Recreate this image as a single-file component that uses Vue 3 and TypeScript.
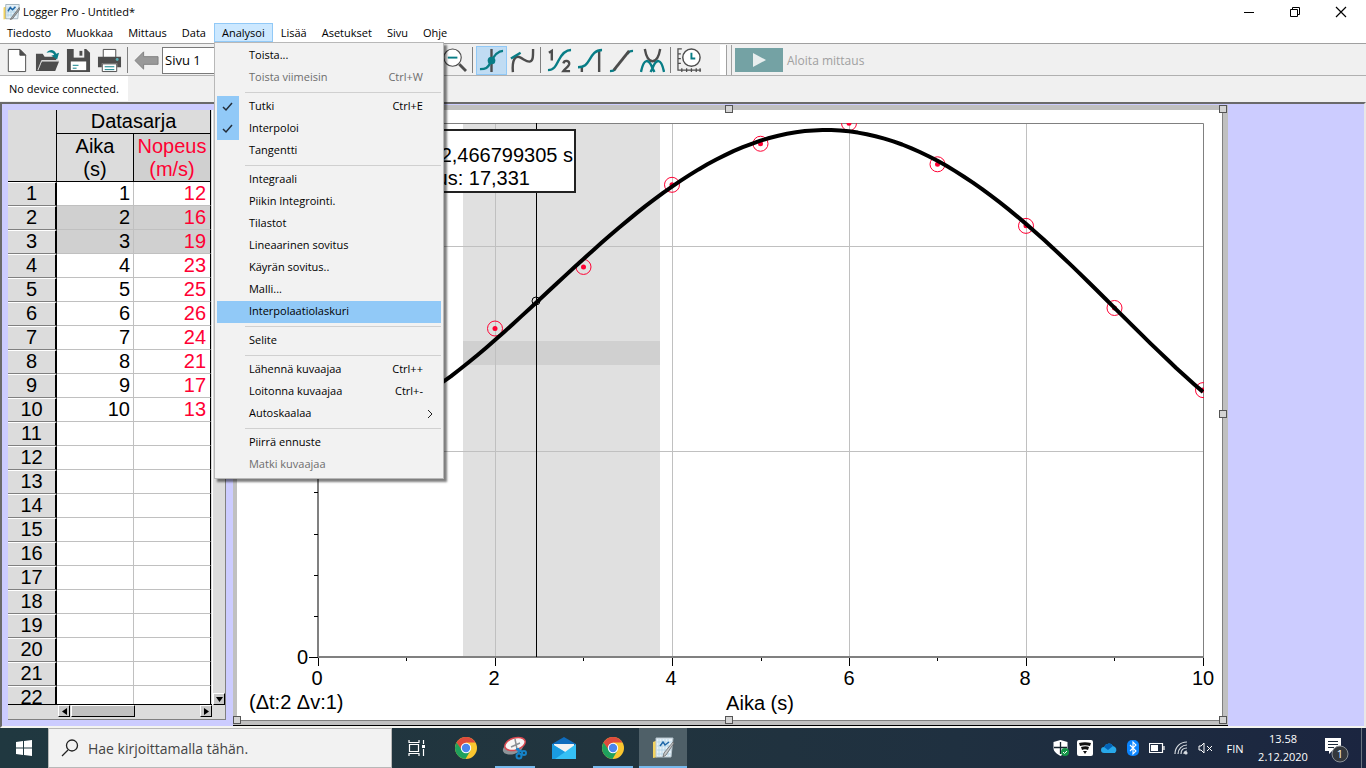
<script setup lang="ts">
import { computed, ref } from 'vue'

interface MenuEntry {
  label?: string
  keys?: string
  checked?: boolean
  disabled?: boolean
  active?: boolean
  submenu?: boolean
}

const menusBefore = ['Tiedosto', 'Muokkaa', 'Mittaus', 'Data']
const menusAfter = ['Lisää', 'Asetukset', 'Sivu', 'Ohje']

const entries: MenuEntry[] = [
  { label: 'Toista...' },
  { label: 'Toista viimeisin', keys: 'Ctrl+W', disabled: true },
  {},
  { label: 'Tutki', keys: 'Ctrl+E', checked: true },
  { label: 'Interpoloi', checked: true },
  { label: 'Tangentti' },
  {},
  { label: 'Integraali' },
  { label: 'Piikin Integrointi.' },
  { label: 'Tilastot' },
  { label: 'Lineaarinen sovitus' },
  { label: 'Käyrän sovitus..' },
  { label: 'Malli...' },
  { label: 'Interpolaatiolaskuri', active: true },
  {},
  { label: 'Selite' },
  {},
  { label: 'Lähennä kuvaajaa', keys: 'Ctrl++' },
  { label: 'Loitonna kuvaajaa', keys: 'Ctrl+-' },
  { label: 'Autoskaalaa', submenu: true },
  {},
  { label: 'Piirrä ennuste' },
  { label: 'Matki kuvaajaa', disabled: true },
]

const page = ref('Sivu 1')
const menuOpen = ref(true)
const speeds = [12, 16, 19, 23, 25, 26, 24, 21, 17, 13]
const rows = Array.from({ length: 22 }, (_, i) => ({
  n: i + 1,
  t: i < speeds.length ? i + 1 : '',
  v: speeds[i] ?? '',
  selected: i === 1 || i === 2,
}))

const toX = (t: number) => 85 + t * 88.5
const toY = (v: number) => 552 - v * 20.53

// Fitted speed around its peak at t = 5.74 s
const fitted = (t: number) => {
  const d = t - 5.74
  return 25.67 - d * d * (0.965 + 0.0045 * d - 0.0155 * d * d)
}

const curve = computed(() => {
  const points: string[] = []
  for (let i = 10; i <= 100; i++) {
    points.push(`${toX(i / 10).toFixed(1)},${toY(fitted(i / 10)).toFixed(1)}`)
  }
  return points.join(' ')
})

const handles = [
  [0, 0], [492, 0], [986, 0], [0, 305], [986, 305], [0, 611], [492, 611], [986, 611],
]
</script>

<template>
  <div class="window">
    <header class="titlebar">
      <svg class="app-icon" viewBox="0 0 24 24" width="18" height="18" aria-hidden="true">
        <path d="M2 6l5-2v17l-5 1z" fill="#f4d35e" />
        <path d="M5 2h18l-2 19H5z" fill="#e6f1f8" stroke="#8fa3ad" />
        <path d="M8 5v14M12 4v15M16 4v15M6 8h15M6 12h15M6 16h14" stroke="#a9cfe4" />
        <path d="M8 11l3-5 3 3 4-4" fill="none" stroke="#1f67a8" stroke-width="2" />
        <path d="M23 6L13 19l-2 3 3-1L24 8z" fill="#a7abad" stroke="#666" />
      </svg>
      <span class="title">Logger Pro - Untitled*</span>
      <button class="wbtn" aria-label="Pienennä"><svg width="12" height="12"><path d="M1 6.500h10" stroke="#000" /></svg></button>
      <button class="wbtn" aria-label="Palauta"><svg width="12" height="12" fill="none" stroke="#000"><path d="M1.500 3.500h7v7h-7zM3.500 3V1.500h7v7H9" /></svg></button>
      <button class="wbtn" aria-label="Sulje"><svg width="12" height="12"><path d="M1 1l10 10M11 1L1 11" stroke="#000" stroke-width="1.200" /></svg></button>
    </header>

    <nav class="menubar">
      <button v-for="m in menusBefore" :key="m" class="menu">{{ m }}</button>
      <div class="menu-host">
        <button class="menu open" aria-haspopup="true" :aria-expanded="menuOpen" @click="menuOpen = !menuOpen">Analysoi</button>
        <div v-if="menuOpen" class="dropdown" role="menu">
          <template v-for="(e, i) in entries" :key="i">
            <hr v-if="!e.label" class="sep" />
            <button
              v-else
              class="entry"
              :class="{ active: e.active }"
              :disabled="e.disabled"
              :role="e.checked ? 'menuitemcheckbox' : 'menuitem'"
              :aria-checked="e.checked ? true : undefined"
            >
              <span class="mark" :class="{ on: e.checked }">
                <svg v-if="e.checked" width="12" height="10"><path d="M1 5l3 3 6-7" fill="none" stroke="#222c38" stroke-width="1.500" /></svg>
              </span>
              <span class="entry-label">{{ e.label }}</span>
              <span v-if="e.keys" class="keys">{{ e.keys }}</span>
              <svg v-if="e.submenu" class="sub" width="6" height="10"><path d="M1 1l4 4-4 4" fill="none" stroke="#222" /></svg>
            </button>
          </template>
        </div>
      </div>
      <button v-for="m in menusAfter" :key="m" class="menu">{{ m }}</button>
    </nav>

    <div class="toolbar">
      <button class="tool" aria-label="Uusi"><svg viewBox="0 0 26 26"><path d="M4.500 1.500h12l6 6v17h-18z" fill="#fff" stroke="#4d4d4d" /><path d="M16.500 1.500v6h6z" fill="#4d4d4d" stroke="#4d4d4d" /></svg></button>
      <button class="tool" aria-label="Avaa"><svg viewBox="0 0 26 26"><path d="M1 24V6h7l2 3h12v4H7L3 24z" fill="#4d4d4d" /><path d="M7 14h18l-4 10H3z" fill="#4d4d4d" /><path d="M3 23l4-10h18" fill="none" stroke="#d8d8d8" /><path d="M12 5c3-4 8-4 10 1l3-1-2 7-6-4 3-1c-2-3-5-3-8-2z" fill="#087d86" /></svg></button>
      <button class="tool" aria-label="Tallenna"><svg viewBox="0 0 26 26"><path d="M1 1h20l4 4v20H1z" fill="#4d4d4d" /><path d="M8 1h11v9H8z" fill="#f0f0f0" /><path d="M14 3h3v5h-3z" fill="#4d4d4d" /><path d="M5 14h16v9H5z" fill="#fff" /><path d="M7 18h6M7 21h4" stroke="#087d86" /></svg></button>
      <button class="tool" aria-label="Tulosta"><svg viewBox="0 0 26 26"><path d="M6.500 1.500h13v9h-13z" fill="#fff" stroke="#4d4d4d" /><path d="M1 9h24v11h-4v-4H5v4H1z" fill="#4d4d4d" /><circle cx="21" cy="12" r="1.500" fill="#58b1b7" /><path d="M5.500 16.500h15v8h-15z" fill="#fff" stroke="#4d4d4d" /><path d="M8 19.500h10M8 22.500h10" stroke="#087d86" /></svg></button>
      <i class="bar"></i>
      <button class="tool" aria-label="Edellinen sivu"><svg viewBox="0 0 26 26"><path d="M1 13l9-9v5h15v8H10v5z" fill="#999" stroke="#808080" /></svg></button>
      <select v-model="page" class="page-select" aria-label="Sivu"><option>Sivu 1</option></select>
      <button class="tool" aria-label="Loitonna"><svg viewBox="0 0 26 26"><path d="M18 17l7 7" stroke="#4d4d4d" stroke-width="3" /><circle cx="11" cy="10" r="9" fill="#fff" stroke="#4d4d4d" stroke-width="1.200" /><path d="M6 10h10" stroke="#087d86" stroke-width="2" /></svg></button>
      <i class="bar"></i>
      <button class="tool chosen" aria-label="Tutki" aria-pressed="true"><svg viewBox="0 0 26 26"><path d="M13 1v24" stroke="#4d4d4d" stroke-width="2.500" /><path d="M1 22c6 0 8-1 11-7s7-12 13-12" fill="none" stroke="#087d86" stroke-width="2.500" /><circle cx="13" cy="13" r="4" fill="#087d86" /></svg></button>
      <button class="tool" aria-label="Tangentti"><svg viewBox="0 0 26 26"><path d="M3 25C2 13 5 7 11 10c4 2 7 5 10 4s3-5 3-13" fill="none" stroke="#4d4d4d" stroke-width="2.500" /><path d="M1 11l10-6" stroke="#087d86" stroke-width="2.500" /></svg></button>
      <i class="bar"></i>
      <button class="tool" aria-label="Tilastot"><svg viewBox="0 0 26 26"><path d="M1 23c6 0 8-4 11-10S19 2 25 2" fill="none" stroke="#087d86" stroke-width="2.500" /><path d="M2 5l3-2v10" fill="none" stroke="#4d4d4d" stroke-width="2.500" /><path d="M17 16c1-4 7-3 6 1-1 3-4 4-6 7h7" fill="none" stroke="#4d4d4d" stroke-width="2.500" /></svg></button>
      <button class="tool" aria-label="Integraali"><svg viewBox="0 0 26 26"><path d="M4 20v5M22 2v23" stroke="#4d4d4d" stroke-width="2.500" /><path d="M0 20c7 0 9-3 12-8s6-10 13-10" fill="none" stroke="#087d86" stroke-width="2.500" /></svg></button>
      <button class="tool" aria-label="Lineaarinen sovitus"><svg viewBox="0 0 26 26"><path d="M1 24c3 0 4 0 6-3M19 6c2-3 4-3 6-3" fill="none" stroke="#087d86" stroke-width="2.500" /><path d="M5 23L21 3" stroke="#4d4d4d" stroke-width="3" /></svg></button>
      <button class="tool" aria-label="Käyrän sovitus"><svg viewBox="0 0 26 26"><path d="M5 1c3 17 13 17 16 0" fill="none" stroke="#4d4d4d" stroke-width="2.500" /><path d="M1 25c3-15 8-14 12-4l2 4M25 25c-3-15-8-14-12-4l-2 4" fill="none" stroke="#087d86" stroke-width="2.500" /></svg></button>
      <i class="bar"></i>
      <button class="tool" aria-label="Mittausasetukset"><svg viewBox="0 0 26 26"><path d="M5 1H1v22h24M1 6h3M1 11h3M1 16h3M5 25v-4M10 25v-4M15 25v-4M20 25v-4M24 25v-4" fill="none" stroke="#4d4d4d" stroke-width="1.300" /><circle cx="15" cy="10" r="9" fill="#fff" stroke="#4d4d4d" stroke-width="1.500" /><path d="M15 5v6h4" fill="none" stroke="#087d86" stroke-width="2" /></svg></button>
      <div class="grip"></div>
      <button class="collect" disabled>
        <span class="play"><svg width="14" height="14"><path d="M1 0l13 7-13 7z" fill="#e8eeee" /></svg></span>
        Aloita mittaus
      </button>
    </div>

    <div class="status"><span>No device connected.</span></div>

    <main class="workspace">
      <section class="data-pane">
        <div class="table-view">
          <table>
            <colgroup><col class="c-num" /><col class="c-val" /><col class="c-val" /></colgroup>
            <thead>
              <tr><th rowspan="2" class="corner"></th><th colspan="2" class="set">Datasarja</th></tr>
              <tr><th class="unit">Aika<br />(s)</th><th class="unit red picked">Nopeus<br />(m/s)</th></tr>
            </thead>
            <tbody>
              <tr v-for="r in rows" :key="r.n" :class="{ selected: r.selected }">
                <th scope="row">{{ r.n }}</th>
                <td>{{ r.t }}</td>
                <td class="red">{{ r.v }}</td>
              </tr>
            </tbody>
          </table>
        </div>
        <div class="vscroll"><button class="sbtn" aria-label="Alas"><svg width="7" height="5"><path d="M0 0h7L3.500 5z" /></svg></button></div>
        <div class="hscroll">
          <button class="sbtn" aria-label="Vasen"><svg width="5" height="7"><path d="M5 0v7L0 3.500z" /></svg></button>
          <span class="thumb"></span>
          <button class="sbtn" aria-label="Oikea"><svg width="5" height="7"><path d="M0 0v7l5-3.500z" /></svg></button>
        </div>
      </section>

      <section class="chart-pane">
        <svg class="chart" viewBox="0 0 995 621" preserveAspectRatio="xMinYMin meet" role="img" aria-label="Nopeus ajan funktiona">
          <defs><clipPath id="plot"><rect x="85" y="18" width="886" height="534" /></clipPath></defs>
          <rect width="995" height="621" fill="#c0c0c0" />
          <rect x="4" y="5" width="985" height="610" fill="#fff" />
          <path d="M989.500 5v610.500H4" fill="none" stroke="#808080" />
          <path d="M0 620.500h995" stroke="#000" />
          <rect x="230" y="18" width="197" height="534" fill="#e0e0e0" />
          <rect x="230" y="236" width="197" height="24" fill="#d0d0d0" />
          <path d="M262.500 18v534M439.500 18v534M616.500 18v534M793.500 18v534M85 141.500h885M85 346.500h885" fill="none" stroke="#c0c0c0" />
          <path d="M84 18.500h886.500V552" fill="none" stroke="#808080" />
          <path d="M85 18v534M84 552h887" fill="none" stroke="#808080" stroke-width="2" />
          <path d="M76 552.500h9M85.500 553v8M262.500 553v8M439.500 553v8M616.500 553v8M793.500 553v8M970.500 553v8M173.500 553v3M350.500 553v3M528.500 553v3M704.500 553v3M881.500 553v3M81 387.500h4M81 429.500h4M81 470.500h4M81 511.500h4" stroke="#000" />
          <path d="M303.500 18v534" stroke="#000" />
          <circle cx="303" cy="196" r="4" fill="none" stroke="#000" />
          <g clip-path="url(#plot)">
            <g v-for="(v, i) in speeds" :key="i">
              <circle :cx="toX(i + 1)" :cy="toY(v)" r="7.500" fill="none" stroke="#f03" />
              <circle :cx="toX(i + 1)" :cy="toY(v)" r="2.500" fill="#f03" />
            </g>
            <polyline :points="curve" fill="none" stroke="#000" stroke-width="4" stroke-linejoin="round" />
          </g>
          <rect x="151" y="25" width="191" height="62" fill="#fff" stroke="#222" stroke-width="2" />
          <text x="340" y="57" text-anchor="end">Aika: 2,466799305 s</text>
          <text x="297" y="80" text-anchor="end">Nopeus: 17,331</text>
          <text x="75" y="559" text-anchor="end">0</text>
          <g text-anchor="middle">
            <text x="84" y="580">0</text>
            <text x="261" y="580">2</text>
            <text x="438" y="580">4</text>
            <text x="616" y="580">6</text>
            <text x="792" y="580">8</text>
            <text x="970" y="580">10</text>
            <text x="527" y="605">Aika (s)</text>
          </g>
          <text x="16" y="604">(Δt:2 Δv:1)</text>
          <g v-for="(h, i) in handles" :key="i">
            <rect :x="h[0] + 0.5" :y="h[1] + 0.5" width="7" height="7" fill="#d4d4d4" stroke="#555" />
          </g>
        </svg>
      </section>
    </main>

    <footer class="taskbar">
      <button class="start" aria-label="Käynnistä"><svg width="16" height="16"><path d="M0 2l7-1v6.500H0zM8 1l8-1v7.500H8zM0 8.500h7V15l-7-1zM8 8.500h8V16l-8-1z" fill="#fff" /></svg></button>
      <label class="search">
        <svg width="18" height="18" fill="none" stroke="#222" stroke-width="1.300"><circle cx="11" cy="6.500" r="5.500" /><path d="M7 11l-6 6" /></svg>
        <input type="text" placeholder="Hae kirjoittamalla tähän." aria-label="Haku" />
      </label>
      <button class="task" aria-label="Tehtävänäkymä"><svg width="18" height="16" fill="none" stroke="#fff" stroke-width="1.200"><path d="M1.500 4.500h9v7h-9zM1 0v2.500h10V0M1 16v-2.500h10V16M15.500 0v4M15.500 9v7" /><path d="M14 5h3v3h-3z" fill="#fff" stroke="none" /></svg></button>
      <button class="task" aria-label="Chrome"><svg width="24" height="24" viewBox="0 0 24 24"><circle cx="12" cy="12" r="11" fill="#fbc62f" /><path d="M2.500 6.500A11 11 0 0 1 21.500 6.500H12L7 14z" fill="#de4b3d" /><path d="M2.500 6.500A11 11 0 0 0 11.500 23l5-8.500-9-1z" fill="#1fa15d" /><circle cx="12" cy="12" r="5.200" fill="#fff" /><circle cx="12" cy="12" r="4.200" fill="#4a86ee" /></svg></button>
      <button class="task running" aria-label="Kuvakaappaus"><svg width="26" height="24" viewBox="0 0 26 24"><ellipse cx="11" cy="12" rx="10.500" ry="6" transform="rotate(-18 11 12)" fill="#8d9499" /><ellipse cx="13" cy="8" rx="10.500" ry="6" transform="rotate(-18 13 8)" fill="#f7f7f7" stroke="#d94a52" stroke-width="1.500" /><path d="M13 3l2 10M9 11l9-4" stroke="#8b8f94" stroke-width="1.500" /><path d="M14 13l7 3M16 12l1 6" stroke="#1683c8" stroke-width="2" /><circle cx="17" cy="20" r="2.500" fill="none" stroke="#1683c8" stroke-width="2" /><circle cx="22" cy="17" r="2" fill="none" stroke="#1683c8" stroke-width="2" /></svg></button>
      <button class="task" aria-label="Sähköposti"><svg width="24" height="24" viewBox="0 0 24 24"><path d="M0 8l12-7 12 7v15H0z" fill="#0f6cbd" /><path d="M2 8h20v10H2z" fill="#f2f2f2" /><path d="M0 8l13 8L24 8v15H0z" fill="#35c0f5" /><path d="M0 8l13 8L3 23H0z" fill="#1a9be0" /></svg></button>
      <button class="task running" aria-label="Chrome, ikkuna"><svg width="24" height="24" viewBox="0 0 24 24"><circle cx="12" cy="12" r="11" fill="#fbc62f" /><path d="M2.500 6.500A11 11 0 0 1 21.500 6.500H12L7 14z" fill="#de4b3d" /><path d="M2.500 6.500A11 11 0 0 0 11.500 23l5-8.500-9-1z" fill="#1fa15d" /><circle cx="12" cy="12" r="5.200" fill="#fff" /><circle cx="12" cy="12" r="4.200" fill="#4a86ee" /></svg></button>
      <button class="task running current" aria-label="Logger Pro"><svg viewBox="0 0 24 24" width="24" height="24"><path d="M2 6l5-2v17l-5 1z" fill="#f4d35e" /><path d="M5 2h17l-2 19H5z" fill="#e6f1f8" stroke="#b5c3cb" /><path d="M8 3v17M11 3v17M14 3v17M17 3v17M6 6h15M6 10h15M6 14h14M6 18h14" stroke="#a9cfe4" stroke-width=".7" /><path d="M9 10l3-4 2 3 4-3" fill="none" stroke="#1f67a8" stroke-width="1.500" /><path d="M22 6l-9 11-1 4 3-2 8-12z" fill="#c5c8ca" stroke="#666" stroke-width=".8" /></svg></button>
      <div class="tray">
        <span class="ticon"><svg width="16" height="17" viewBox="0 0 16 17"><path d="M7.500 0l7 2v6c0 4-4 6-7 8-3-2-7-4-7-8V2z" fill="#fff" /><path d="M7.500 2v12M1 7.500h13" stroke="#17242f" stroke-width="1.300" /><circle cx="12" cy="12" r="4" fill="#159447" /><path d="M10 12l1.500 1.500L14 11" fill="none" stroke="#fff" /></svg></span>
        <span class="ticon"><svg width="16" height="16"><rect width="16" height="16" rx="2" fill="#fff" /><path d="M2 3c4-1 8-1 12 0l-1 3c-3-1-7-1-10 0zM4 7c3-1 6-1 8 0l-1 3c-2-1-4-1-6 0zM6 11h4l-2 3z" fill="#111" /></svg></span>
        <span class="ticon"><svg width="17" height="11"><path d="M3 10a3 3 0 0 1 0-6 5 5 0 0 1 9-1 4 4 0 0 1 2 7z" fill="#28a8ea" /><path d="M3 4a5 5 0 0 1 9-1L7 7z" fill="#0364b8" /></svg></span>
        <span class="ticon"><svg width="12" height="16"><rect width="12" height="16" rx="5" fill="#0a84ff" /><path d="M3 5l6 6-3 3V2l3 3-6 6" fill="none" stroke="#fff" stroke-width="1.100" /></svg></span>
        <span class="ticon"><svg width="16" height="10"><path d="M.5.5h13v9H.5zM15 3v4" fill="none" stroke="#fff" stroke-width="1.200" /><path d="M2 2h7v6H2z" fill="#fff" /></svg></span>
        <span class="ticon"><svg width="14" height="14" fill="none" stroke="#d8dde2" stroke-width="1.200"><path d="M1 13C1 6 6 1 13 1M4 13c0-5 4-9 9-9M7 13c0-4 2-6 6-6" /><path d="M10 13c0-2 1-3 3-3" /><circle cx="12" cy="12" r="1" fill="#fff" /></svg></span>
        <span class="ticon"><svg width="15" height="12" fill="none" stroke="#fff"><path d="M1 4h2l3-3v10L3 8H1zM9 4l5 5M14 4L9 9" /></svg></span>
        <span class="lang">FIN</span>
        <span class="clock">13.58<br />2.12.2020</span>
        <button class="notif" aria-label="Ilmoitukset"><svg width="26" height="26"><path d="M1 1h16v13H8l-3 3v-3H1z" fill="#fff" /><path d="M4 4.500h10M4 7.500h10M4 10.500h6" stroke="#1c2a3a" /><circle cx="16" cy="17" r="8" fill="#34383d" stroke="#8a9096" /><text x="16" y="21" text-anchor="middle" fill="#fff" class="badge">1</text></svg></button>
        <span class="desk"></span>
      </div>
    </footer>
  </div>
</template>

<style>
body {
  margin: 0;
}
</style>

<style scoped>
.window {
  display: flex;
  flex-direction: column;
  height: 100vh;
  overflow: hidden;
  background: #f0f0f0;
  color: #000;
  font: 12px "Open Sans", "Noto Sans", sans-serif;
}
.window * {
  box-sizing: border-box;
}
button {
  padding: 0;
  border: 0;
  background: none;
  color: inherit;
  font: inherit;
}
.titlebar {
  display: flex;
  align-items: center;
  height: 23px;
  padding: 0 2px;
  background: #fff;
}
.title {
  flex: 1;
  padding-left: 3px;
  font-size: 11px;
}
.wbtn {
  display: grid;
  place-items: center;
  width: 46px;
  height: 22px;
}
.menubar {
  display: flex;
  gap: 1px;
  height: 20px;
  background: #fff;
  font-size: 11px;
}
.menu {
  height: 19px;
  padding: 0 7px;
  line-height: 19px;
}
.menu.open {
  border: 1px solid #91c9f7;
  line-height: 17px;
  background: #cce8ff;
}
.menu-host {
  position: relative;
}
.dropdown {
  position: absolute;
  z-index: 5;
  top: 19px;
  left: 0;
  width: 230px;
  padding: 2px;
  border: 1px solid #b8b8b8;
  background: #f2f2f2;
  box-shadow: 3px 3px 2px rgba(0, 0, 0, 0.5);
}
.entry {
  display: flex;
  align-items: center;
  width: 100%;
  height: 22px;
  padding-right: 18px;
  line-height: 20px;
  text-align: left;
}
.entry-label,
.keys {
  height: 22px;
}
.entry:disabled {
  color: #6d6d6d;
}
.entry.active {
  background: #91c9f7;
}
.mark {
  display: grid;
  place-items: center;
  width: 22px;
  height: 22px;
  margin-right: 10px;
}
.mark.on {
  background: #91c9f7;
}
.entry-label {
  flex: 1;
}
.sub {
  margin-right: -10px;
}
.sep {
  height: 1px;
  margin: 3px 0 3px 28px;
  border: 0;
  background: #d0d0d0;
}
.toolbar {
  display: flex;
  align-items: center;
  height: 33px;
  padding: 1px 0 0 1px;
  border-top: 1px solid #a0a0a0;
  border-bottom: 1px solid #b0b0b0;
}
.tool {
  display: grid;
  place-items: center;
  width: 31px;
  height: 29px;
}
.tool svg {
  width: 25px;
  height: 25px;
}
.tool.chosen {
  border: 1px solid #91c9f7;
  background: #c0dcf3;
}
.bar {
  width: 1px;
  height: 26px;
  margin: 0 3px 0 2px;
  background: #808080;
}
.page-select {
  width: 277px;
  height: 27px;
  border: 1px solid #7a7a7a;
  padding: 0 2px;
  border-radius: 0;
  appearance: none;
  background: #fff;
  color: #000;
  font: 13px "Open Sans", sans-serif;
}
.grip {
  align-self: stretch;
  width: 12px;
  margin-left: 15px;
  border: solid #a0a0a0;
  border-width: 0 1px;
  border-left: 6px solid #fff;
  box-shadow: inset 1px 0 #a0a0a0;
}
.collect {
  display: flex;
  align-items: center;
  gap: 4px;
  margin-left: 3px;
  color: #a0a0a0;
}
.play {
  display: grid;
  place-items: center;
  width: 48px;
  height: 24px;
  background: #74a2a4;
}
.status {
  height: 26px;
  font-size: 11px;
}
.status span {
  display: inline-block;
  height: 25px;
  padding: 0 9px;
  background: #fff;
  line-height: 25px;
}
.workspace {
  display: grid;
  grid-template-columns: 231px minmax(0, 995fr) minmax(0, 136fr);
  grid-template-rows: minmax(0, 1fr);
  flex: 1;
  min-height: 0;
  border: 2px solid #6a6a6a;
  border-right-color: #e8e8e8;
  border-bottom-color: #f4f4f0;
  background: #ccf;
}
.data-pane {
  display: grid;
  grid-template: minmax(0, 1fr) 14px / 204px 14px;
  margin: 6px 7px 6px 6px;
  border-right: 1px solid #808080;
  border-bottom: 1px solid #808080;
  background: #dcdcdc;
  font-family: "Liberation Sans", sans-serif;
}
.table-view {
  overflow: hidden;
  border-bottom: 1px solid #000;
}
table {
  width: 203px;
  table-layout: fixed;
  border-collapse: separate;
  border-spacing: 0;
  font-size: 20px;
  line-height: 23px;
}
.c-num {
  width: 49px;
}
.c-val {
  width: 77px;
}
th,
td {
  height: 24px;
  padding: 0;
  font-weight: 400;
}
th {
  background: #dcdcdc;
}
thead th {
  border-right: 1px solid #000;
  border-bottom: 1px solid #000;
}
thead .unit {
  height: 48px;
  line-height: 23px;
}
thead .picked {
  background: #d0d0d0;
}
tbody th {
  border-top: 1px solid #fff;
  border-right: 2px solid #000;
  border-bottom: 1px solid #808080;
  line-height: 20px;
  vertical-align: top;
}
td {
  padding-right: 3px;
  border-right: 1px solid #c0c0c0;
  border-bottom: 1px solid #c0c0c0;
  background: #fff;
  text-align: right;
}
td:last-child {
  padding-right: 4px;
  border-right-color: #000;
}
.selected td {
  background: #d0d0d0;
}
.red {
  color: #f03;
}
.vscroll {
  display: flex;
  align-items: flex-end;
  border-left: 1px solid #fff;
}
.sbtn {
  display: grid;
  place-items: center;
  width: 12px;
  height: 12px;
  border: 1px solid;
  border-color: #fff #000 #000 #fff;
  background: #c8c8c8;
}
.hscroll {
  grid-column: 1;
  display: flex;
  margin-left: 50px;
}
.thumb {
  width: 64px;
  height: 12px;
  margin: 0 auto 0 1px;
  border: 1px solid;
  border-color: #fff #000 #000 #fff;
  background: #c0c0c0;
}
.chart-pane {
  min-width: 0;
  padding-top: 1px;
}
.chart {
  display: block;
  width: 100%;
  height: 100%;
  font: 20px "Liberation Sans", sans-serif;
}
.taskbar {
  display: flex;
  height: 40px;
  background: linear-gradient(90deg, #203840, #21343e 45%, #1f3040 70%, #1b2540);
  color: #fff;
  font-size: 11px;
}
.start {
  display: grid;
  place-items: center;
  width: 48px;
}
.search {
  display: flex;
  align-items: center;
  width: 344px;
  padding-left: 12px;
  border: 1px solid #b8b8b8;
  background: #f2f2f2;
}
.search input {
  flex: 1;
  min-width: 0;
  margin-left: 9px;
  padding: 0;
  border: 0;
  outline: 0;
  background: none;
  font: 14px "Open Sans", sans-serif;
}
.search input::placeholder {
  color: #444;
  opacity: 1;
}
.task {
  display: grid;
  place-items: center;
  position: relative;
  width: 49px;
}
.running::after {
  content: "";
  position: absolute;
  right: 4px;
  bottom: 0;
  left: 5px;
  height: 2px;
  background: #76b9ed;
}
.current {
  margin-left: 2px;
  width: 48px;
  background: #4f6068;
}
.current::after {
  right: 0;
  left: 0;
}
.tray {
  display: flex;
  align-items: center;
  margin-left: auto;
}
.ticon {
  display: grid;
  place-items: center;
  width: 24px;
}
.lang {
  width: 36px;
  text-align: center;
}
.clock {
  width: 60px;
  line-height: 18px;
  text-align: center;
}
.notif {
  display: grid;
  place-items: center;
  width: 48px;
}
.notif svg {
  margin-top: 4px;
}
.badge {
  font-size: 11px;
}
.desk {
  width: 5px;
  height: 40px;
  border-left: 1px solid #6a7480;
}
</style>
